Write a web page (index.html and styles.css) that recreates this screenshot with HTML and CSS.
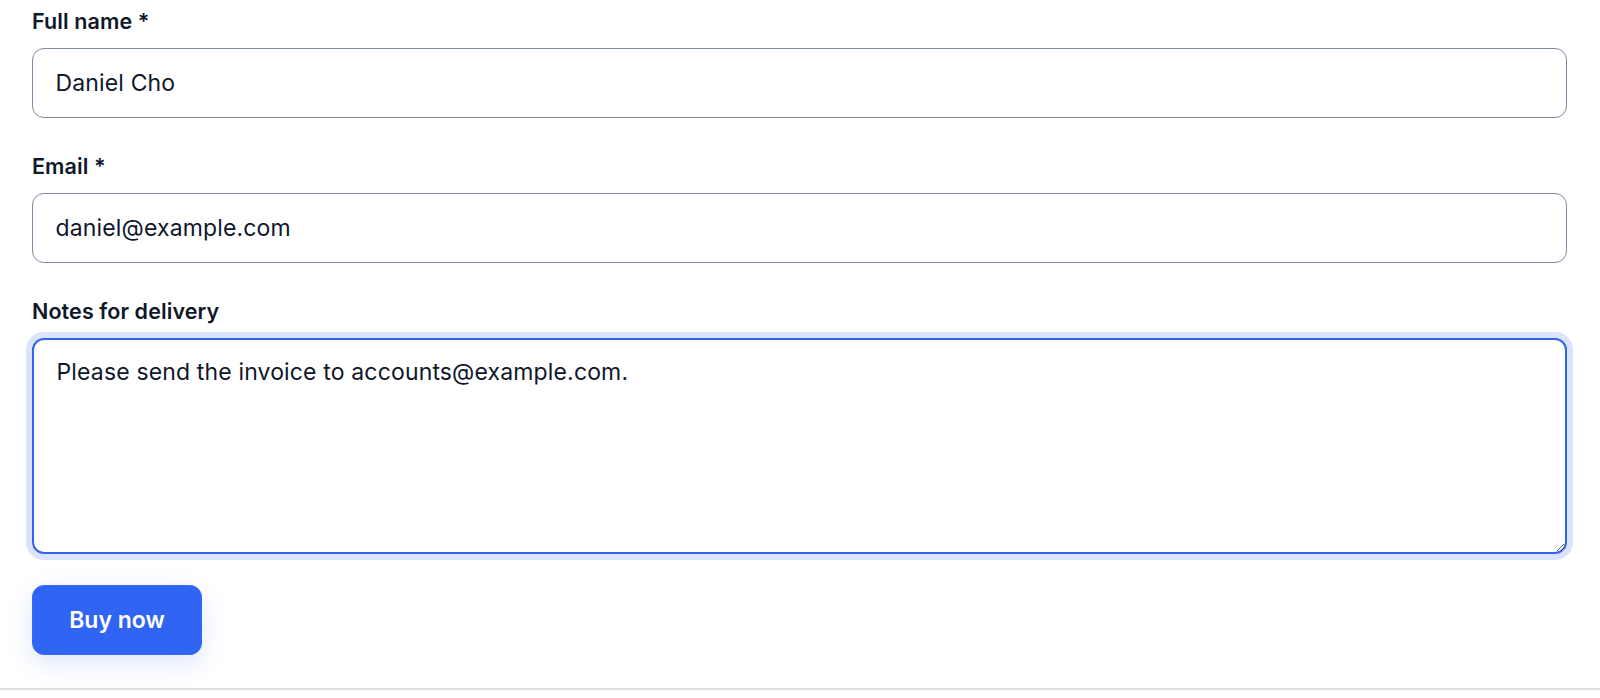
FILE: index.html
```html
<!DOCTYPE html>
<html lang="en">
<head>
  <meta charset="UTF-8">
  <title>Checkout</title>
  <link rel="stylesheet" href="styles.css">
</head>
<body>

<form class="checkout">
  <div class="field">
    <label for="fullName">Full name *</label>
    <input id="fullName" class="text-input" value="Daniel Cho">
  </div>

  <div class="field">
    <label for="email">Email *</label>
    <input id="email" class="text-input" value="daniel@example.com">
  </div>

  <div class="field">
    <label for="notes">Notes for delivery</label>
    <textarea id="notes" class="text-input notes is-focused">Please send the invoice to accounts@example.com.</textarea>
  </div>

  <button type="button" class="buy-btn">Buy now</button>
</form>

</body>
</html>
```

FILE: styles.css
```css
html, body { margin: 0; background: #fff; }
body { font-family: Inter, "Noto Sans", sans-serif; color: #0f172a; }

.checkout { display: flex; flex-direction: column; gap: 33.5px; padding: 6px 33px 33px 32px; border-bottom: 2px solid #dcdee3; }

.field { display: flex; flex-direction: column; gap: 10px; }
.field label { font-size: 21.5px; line-height: 31.5px; font-weight: 600; letter-spacing: 0.1px; color: #0f172a; }

.text-input { box-sizing: border-box; width: 100%; height: 70px; margin: 0; padding: 16.5px 22.5px; font: inherit; font-size: 23px; line-height: 33.75px; letter-spacing: 0.15px; color: #0f172a; background: #fff; border: 1.5px solid #7d8aa1; border-radius: 12px; outline: none; }
.notes { height: 216px; resize: vertical; }
.is-focused { border: 2px solid #2f63f0; box-shadow: 0 0 0 6px #dbe4fd; }

.buy-btn { align-self: flex-start; width: 170px; height: 70px; margin-top: -2.5px; font: inherit; font-size: 23px; font-weight: 600; color: #fff; background: #3064f2; border: 1.5px solid #3a6cf3; border-radius: 12px; box-shadow: 0 8px 24px rgba(48, 100, 242, 0.16); cursor: pointer; }
```
